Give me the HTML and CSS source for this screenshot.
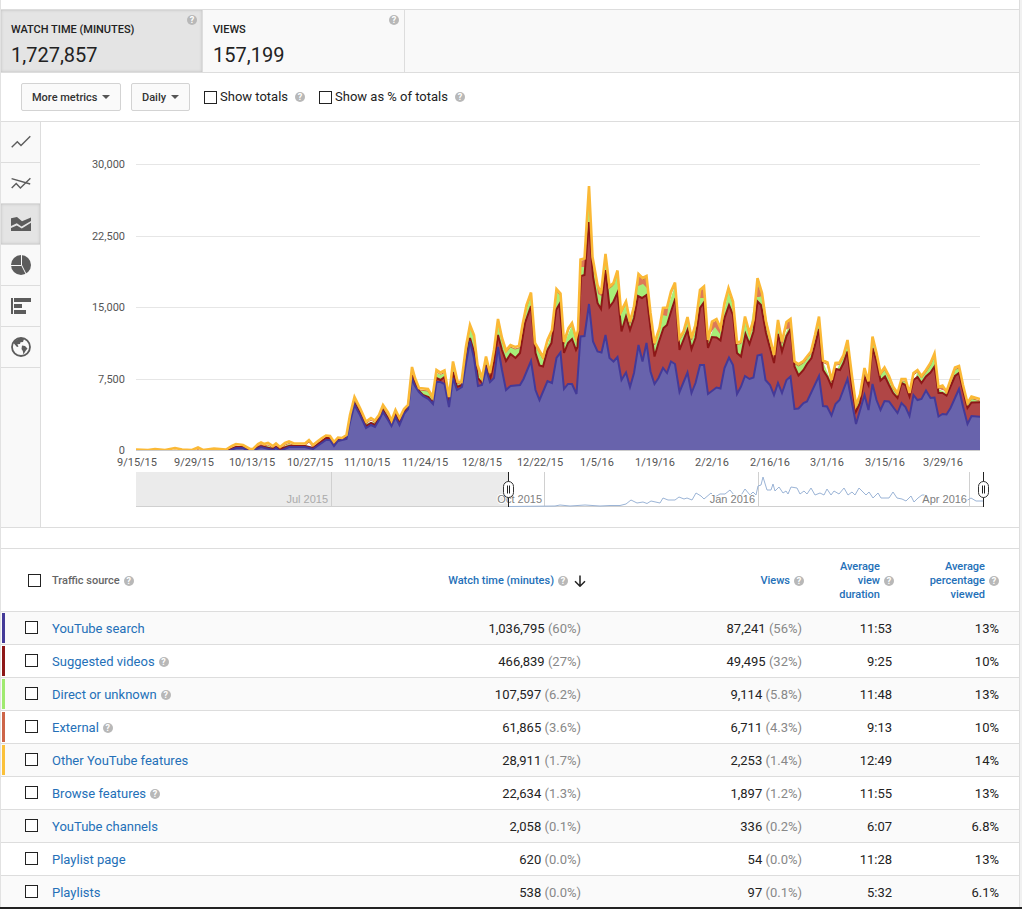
FILE: index.html
```html
<!DOCTYPE html>
<html lang="en">
<head>
<meta charset="utf-8">
<title>Traffic sources</title>
<link rel="stylesheet" href="styles.css">
</head>
<body>
<main class="report">
  <div class="metrics">
    <button class="metric active" type="button"><span class="help">?</span><span class="metric-name">WATCH TIME (MINUTES)</span><span class="metric-value">1,727,857</span></button>
    <button class="metric" type="button"><span class="help">?</span><span class="metric-name">VIEWS</span><span class="metric-value">157,199</span></button>
  </div>

  <div class="toolbar">
    <span class="dropdown metrics-drop"><select aria-label="More metrics"><option>More metrics</option></select></span>
    <span class="dropdown period-drop"><select aria-label="Period"><option>Daily</option></select></span>
    <label class="option totals"><input type="checkbox" class="check">Show totals</label><span class="help">?</span>
    <label class="option percent"><input type="checkbox" class="check">Show as % of totals</label><span class="help">?</span>
  </div>

  <section class="chart-area">
    <nav class="rail">
      <button type="button" aria-label="Line chart"><svg viewBox="0 0 20 20"><path class="line" d="M0.7 15.2 6.3 9.7 10 13.400 19.3 4.300"/></svg></button>
      <button type="button" aria-label="Compare metrics"><svg viewBox="0 0 20 20"><path class="line" d="M.7 15 5.2 10.500 9.4 15 19.4 5.300M.6 5.700 19.2 11"/></svg></button>
      <button type="button" class="active" aria-label="Stacked chart"><svg viewBox="0 0 20 20"><path d="M0 4.2 6 3 11 7.3 20 3.6V7L10.5 12.4 5.8 9.3 0 12zM0 14 5.8 11.6 10.8 14.5 20 8.8V17H0z"/></svg></button>
      <button type="button" aria-label="Pie chart"><svg viewBox="0 0 20 20"><circle cx="10" cy="10" r="10"/><path class="cut" d="M10.5 0V10L15 19M0 10.5H10.5"/></svg></button>
      <button type="button" aria-label="Bar chart"><svg viewBox="0 0 20 20"><path d="M0 2H2V18H0zM3 2H20V6H3zM3 8H11V12H3zM3 14H15V18H3z"/></svg></button>
      <button type="button" aria-label="Map"><svg viewBox="0 0 20 20"><circle class="ring" cx="10" cy="10" r="9"/><path d="M4 4 8 1.5 13 2 12 5 9.5 5.2 9 7 6.3 7.3 7.500 9.500 6 10 2.5 6zM11 8.500 14 9 16.500 11.500 14.5 14 12.5 17.500 11.8 14 10.5 12z"/></svg></button>
    </nav>
    <svg class="chart" viewBox="41 122 978 405" role="img" aria-label="Daily watch time by traffic source">
      <defs>
        <path id="total" d="M136 449.5 148 450 155 449 165 450 175 448 182 449.5 192 450 198 447.5 203 450 214 448.5 226 449.5 232 446 236 444 243 445 250 449 253 449 258 444 261 442.5 264 444 268 443 273 446 276 443.5 280 447 285 443 289 441.5 294 443.5 305 443.5 309 440 313 445 318 441 322 438 326 435.5 330 436 334 442 338 437.5 342 438 346.5 435 350 415 354.5 397 360 408 366 421.5 371 418 375 420.5 379 415 383 405 388 412.5 391.5 420.5 395.5 410 399.5 418 404 409 408 405 412 367 415 378 419 388 428 389 432.5 397 436.5 370 440.5 372.5 444.5 370.5 449 397 453 361.5 457.5 381.5 461.5 382 466 346.5 470 325 474 335 477.5 365 482 378 486 356.5 490 373 494 350 498 319 502 338 506 350.5 510.5 345 515 347 519 346 522.5 325 526.5 305 531 292.5 535 343 543 357 547.5 340 552 330 556.5 289 560.5 293.5 564 342 568.5 328 572 323 576 338 578 330 580.5 259.5 584.5 258.5 589 186 592.5 257 597.5 285 601 293.5 605.5 254 609.5 286.5 613.5 283 617.5 270.5 621 311.5 626 301.5 630 321.5 634 306.5 638.5 274 642.5 278 646.5 276 650.5 313 654.5 343 659.5 328 663 308 667 307.5 671 291.5 675 282.5 679.5 338 683.5 331.5 687.5 317 691.5 338 695.5 325 700 290 704 286.5 708 340 712 321.5 716.5 319 720.5 328 724.5 303 728.5 288 733 301.5 737 342.5 741 341.5 745 316.5 749.5 333 753.5 320 757.5 278 762 293 766 321.5 770 338 774 355 778 320 782 341.5 786.5 322 790.5 319 794.5 361.5 798.5 364 803.5 361 807 356.5 811 351.5 815 335 819 316.5 823 360.5 827.5 362.5 831.5 380 835.5 363 839.5 362.5 843.5 355 847.5 340 852 376.5 856 405 860 395 864.5 368 868.5 381.5 872.5 336.5 876.5 353 880.5 373 884.5 367.5 889 376 893 386.5 897.5 393 901.5 379 905.5 379 909.5 393 913.5 373 917.5 370 921.5 376 926 370 930.5 363 934.5 353.5 938.5 387 942.5 385.5 946.5 391.5 950.5 380 955 367.5 959 366 963 385 967.5 403 971.5 396.5 980 399"/>
        <clipPath id="plot"><path d="M136 150H980V450H136z"/></clipPath>
      </defs>
      <path class="grid" d="M136 164.5H980M136 236.5H980M136 307.5H980M136 379.5H980"/>
      <g class="axis y-axis"><text x="125" y="168">30,000</text><text x="125" y="240">22,500</text><text x="125" y="311">15,000</text><text x="125" y="383">7,500</text><text x="125" y="454">0</text></g>
      <g clip-path="url(#plot)">
        <path class="direct" d="M136 451 226 451 236 447 243 447 250 450 261 445 273 447 280 448 289 444 305 445 313 447 326 438 334 443 346.5 437 354.5 399 366 423 375 422 383 407 391.5 422 395.5 412 399.5 420 408 407 412 369 419 390 428 391 432.5 399 436.5 373 440.5 375 444.5 373 449 400 453 364 457.5 384 461.5 384 466 349 470 328 474 338 477.5 367 482 380 486 359 490 375 494 352 498 321 502 340 506 353 510.5 347 515 349 519 348 526.5 307 531 295 535 345 543 359 552 332 556.5 291 560.5 296 564 344 572 325 577 338 580.5 262 584.5 261 589 189 592.5 260 597.5 287 601 296 605.5 257 609.5 289 617.5 273 621 314 626 304 630 323 638.5 276 646.5 278 650.5 315 654.5 345 663 310 667 310 675 285 679.5 340 687.5 319 691.5 340 700 292 704 289 708 342 716.5 321 720.5 330 728.5 290 733 303 737 344 741 344 745 319 749.5 335 757.5 281 762 295 774 357 778 322 782 343 790.5 321 794.5 363 803.5 363 811 354 819 319 823 362 831.5 382 839.5 364 847.5 342 856 407 864.5 370 868.5 383 872.5 339 880.5 375 884.5 369 897.5 395 901.5 381 905.5 381 909.5 395 917.5 372 921.5 378 934.5 356 938.5 389 946.5 393 955 369 959 368 967.5 405 971.5 398 980 401V451H136z"/>
        <use href="#total" y="2" class="external"/>
        <path class="patch" d="M581 261 585 260 585 267 581 267zM597 287 601 295 605 288 604 297 598 294zM639 276 643 280 647 278 648 289 643 284 638 286zM662 309 668 309 667 316 662 315zM699 291 704 289 705 298 700 298zM711 324 716 321 720 329 720 334 715 327 710 334zM757 283 762 296 759 297 755 297zM786 323 790 321 790 328 785 330zM938 388 942 386 946 391 942 390z"/>
        <path class="suggested" d="M136 451 226 451 236 447 243 447 250 451 261 446 273 449 276 447 280 449 289 446 305 446 313 448 326 438 330 438 334 444 338 439 346.5 437 354.5 403 360 413 366 426 371 423 375 425 379 418 383 410 388 418 391.5 424 395.5 414 399.5 423 404 412 408 407 412 374 415 383 419 391 423 395 428.5 397 433 403 436.5 378 440.5 380 444.5 377 449 405 453 372 457 387 462 385 466 360 470 338 474 352 478 378 482 383 486 365 490 380 494 362 498 335 502 350 506 361 510.5 354 515.5 358 520 353 525 323 531 306 535.5 353 539.5 365.5 543 366.5 547.5 350 551.5 343 556 310 559.5 304 564 353 568 343 572 339 576 350 577.5 347 581 276 584.5 275 589 222 593 276.5 597.5 303 601 309 605.5 270 609.5 307 613.5 301.5 617.5 292.5 621.5 331.5 626 316.5 630 330 634 318 638 296 642 298 646.5 295 650.5 328 654.5 356.5 658.5 343 663.5 328 667 325 671.5 310 675.5 298 679.5 350 687.5 330 691.5 349 695.5 338 700 308 703.5 303 708 348 712 337 716.5 337.5 720.5 340.5 724.5 318 729 305 733 315 737 353 741 356.5 745.5 334 749.5 344 753.5 331.5 757.5 301.5 761 305 766 333 770 348 774 363 778 334 782 351.5 786.5 336 790.5 329 794.5 366.5 798.5 375.5 803.5 370 807 364 811.5 358 815.5 343 819 329 823 370 827.5 377 831.5 386.5 836 369 840 370 843.5 363 847.5 351.5 852 386.5 856 411.5 860 403 864.5 376.5 868.5 385 872.5 348 876.5 361.5 880.5 380.5 885 376.5 889 385 893 393 897.5 398 901.5 383 905.5 385 909.5 396.5 913.5 380 917.5 377 921.5 383 926 376.5 930.5 372.5 934.5 366.5 938.5 393 942.5 393 946.5 395.5 950.5 386.5 955 376 959 373 963 390 967.5 408 971.5 402.5 983 402V455H136z"/>
        <path class="search" d="M133 452 226 452 236 448 243 448 250 452 261 447 273 450 276 448 280 451 289 447 305 447 313 449 326 440 330 440 334 446 338 441 346.5 439 350 422 354.5 405 360 415 366 428 371 425 375 427 379 420 383 412 388 420 391.5 426 395.5 417 399.5 425 404 414 408 409 412 379 415 386 419 392 423 396 428.5 399 433 404 436.5 382 440.5 382 444.5 384 449 407 453 378 457 390 462 387 466 363 470 341 474 358 478 386 482 385 486 369 490 382 494 378 498 347 502 370 506 390 510.5 386 520 385 523.5 379 531 361 535.5 390 539.5 400 547.5 381 552 383 556.5 358 560.5 352.5 564 389 568 384 572 384 576.5 394 580.5 336.5 584.5 336 589 304 593 341.5 597.5 351.5 601.5 352.5 605.5 335 609.5 358 613.5 361.5 617.5 357 621.5 380 626 372.5 630 387 634 373 638.5 345 642.5 361.5 646.5 343 650.5 371.5 654.5 384 658.5 378 663 368 667 373 671 361.5 675 364 679.5 392 687.5 372.5 691.5 393 695.5 383 700 365 704 365 708 394 716.5 387.5 720.5 388.5 724.5 368 729 357.5 733 365 737 394 741 386.5 745 376 749.5 379 753.5 377.5 757.5 355.5 761.5 354.5 765.5 380 770 385 774 395 778 383 782 393 786.5 380 790.5 376.5 794.5 409 798.5 408.5 803.5 403 807 401.5 819 376 823 406 827 406.5 831.5 415.5 835.5 404 839.5 400 847.5 379 852 403 856 424 864.5 395 868.5 410 872.5 384 876.5 400 880.5 410 884.5 401 889 401.5 897.5 413 901.5 403 905.5 407 909.5 416 913.5 395 917.5 400 921.5 399 926 390.5 930.5 398 934.5 397.5 938.5 416.5 942.5 414 946.5 414.5 950.5 408 959 389 963 406.5 967.5 424 971.5 416 984 417V456H133z"/>
        <use href="#total" class="other"/>
      </g>
      <path class="base" d="M136 450.5H980"/>
      <g class="axis x-axis"><text x="137" y="466">9/15/15</text><text x="194" y="466">9/29/15</text><text x="252" y="466">10/13/15</text><text x="310" y="466">10/27/15</text><text x="367" y="466">11/10/15</text><text x="425" y="466">11/24/15</text><text x="482" y="466">12/8/15</text><text x="540" y="466">12/22/15</text><text x="597" y="466">1/5/16</text><text x="655" y="466">1/19/16</text><text x="712" y="466">2/2/16</text><text x="770" y="466">2/16/16</text><text x="827" y="466">3/1/16</text><text x="885" y="466">3/15/16</text><text x="943" y="466">3/29/16</text></g>
      <path class="unselected" d="M136 472H508V507H136z"/>
      <path class="tick" d="M136 506.5H984M331.5 472V507M544.5 472V507M758.5 472V507M969.5 472V507"/>
      <path class="mini" d="M508 506.5 555 506 560 505 570 506 585 505 600 506 610 505.5 620 505.5 626 504 631 500 637 503 643 502 647 503.5 651 501 660 503 663 498 668 500 675 500 679 497 684 499 687 498 692 500 696 493 701 496 704 499 711 493 715 497 720 494 725 494 730 490 734 495 740 497 745 489 750 495 753 492 756 495 758 486 761 485 763 477 767 490 771 490 773 484 775 491 779 487 783 493 786 491 788 494 791 487 797 488 800 494 804 491 807 494 811 488 815 495 820 493 824 495 827 489 831 495 834 491 839 494 844 488 848 495 852 492 855 495 859 488 866 495 869 492 873 498 878 493 881 498 889 498 893 492 897 498 902 499 906 501 911 496 914 502 918 498 922 495 925 495M966 501 971 498 976 501 984 501"/>
      <g class="months"><text x="328" y="503">Jul 2015</text><text x="542" y="503">Oct 2015</text><text x="755" y="503">Jan 2016</text><text x="967" y="503">Apr 2016</text></g>
      <g class="handle"><path d="M508.500 472V507M983.500 472V507"/><rect x="503.500" y="481.500" width="10" height="16" rx="5"/><rect x="978.500" y="481.500" width="10" height="16" rx="5"/><path d="M507.500 485.500V493.500M509.500 485.500V493.500M982.500 485.500V493.500M984.500 485.500V493.500"/></g>
    </svg>
  </section>

  <table class="sources">
    <colgroup><col class="c-check"><col><col class="c-watch"><col class="c-views"><col class="c-duration"><col class="c-percent"></colgroup>
    <thead><tr>
      <th><input type="checkbox" class="check" aria-label="Select all"></th>
      <th><div class="source">Traffic source<span class="help">?</span></div></th>
      <th><div class="head"><a href="#">Watch time (minutes)</a><span class="help">?</span><svg class="sort" viewBox="0 0 12 12"><path d="M6 0.500V11M1 6.200 6 11.200 11 6.200"/></svg></div></th>
      <th><div class="head"><a href="#">Views</a><span class="help">?</span></div></th>
      <th><div class="head"><a href="#">Average<br>view<br>duration</a><span class="help">?</span></div></th>
      <th><div class="head"><a href="#">Average<br>percentage<br>viewed</a><span class="help">?</span></div></th>
    </tr></thead>
    <tbody>
      <tr class="s-search"><td><input type="checkbox" class="check" aria-label="YouTube search"></td><td><a href="#">YouTube search</a></td><td>1,036,795 <i>(60%)</i></td><td>87,241 <i>(56%)</i></td><td>11:53</td><td>13%</td></tr>
      <tr class="s-suggested"><td><input type="checkbox" class="check" aria-label="Suggested videos"></td><td><div class="source"><a href="#">Suggested videos</a><span class="help">?</span></div></td><td>466,839 <i>(27%)</i></td><td>49,495 <i>(32%)</i></td><td>9:25</td><td>10%</td></tr>
      <tr class="s-direct"><td><input type="checkbox" class="check" aria-label="Direct or unknown"></td><td><div class="source"><a href="#">Direct or unknown</a><span class="help">?</span></div></td><td>107,597 <i>(6.2%)</i></td><td>9,114 <i>(5.8%)</i></td><td>11:48</td><td>13%</td></tr>
      <tr class="s-external"><td><input type="checkbox" class="check" aria-label="External"></td><td><div class="source"><a href="#">External</a><span class="help">?</span></div></td><td>61,865 <i>(3.6%)</i></td><td>6,711 <i>(4.3%)</i></td><td>9:13</td><td>10%</td></tr>
      <tr class="s-other"><td><input type="checkbox" class="check" aria-label="Other YouTube features"></td><td><a href="#">Other YouTube features</a></td><td>28,911 <i>(1.7%)</i></td><td>2,253 <i>(1.4%)</i></td><td>12:49</td><td>14%</td></tr>
      <tr><td><input type="checkbox" class="check" aria-label="Browse features"></td><td><div class="source"><a href="#">Browse features</a><span class="help">?</span></div></td><td>22,634 <i>(1.3%)</i></td><td>1,897 <i>(1.2%)</i></td><td>11:55</td><td>13%</td></tr>
      <tr><td><input type="checkbox" class="check" aria-label="YouTube channels"></td><td><a href="#">YouTube channels</a></td><td>2,058 <i>(0.1%)</i></td><td>336 <i>(0.2%)</i></td><td>6:07</td><td>6.8%</td></tr>
      <tr><td><input type="checkbox" class="check" aria-label="Playlist page"></td><td><a href="#">Playlist page</a></td><td>620 <i>(0.0%)</i></td><td>54 <i>(0.0%)</i></td><td>11:28</td><td>13%</td></tr>
      <tr><td><input type="checkbox" class="check" aria-label="Playlists"></td><td><a href="#">Playlists</a></td><td>538 <i>(0.0%)</i></td><td>97 <i>(0.1%)</i></td><td>5:32</td><td>6.1%</td></tr>
    </tbody>
  </table>
</main>
<div class="bottom-edge"></div>
</body>
</html>
```

FILE: styles.css
```css
* { box-sizing: border-box; }
body { margin: 0; padding-right: 2px; background: #f1f1f1; color: #222; font: 13px/16px Roboto, sans-serif; }
button, select, input { margin: 0; font-family: inherit; color: inherit; }
a { color: #2470b8; text-decoration: none; }
.report { padding-top: 9px; background: #fff; border-left: 1px solid #e2e2e2; border-right: 1px solid #ddd; }

.help { display: inline-block; flex: none; width: 10px; height: 10px; border-radius: 50%; background: #b8b8b8; color: #fff; font-size: 9px; font-weight: 700; line-height: 10px; text-align: center; }
.check { appearance: none; display: block; width: 13px; height: 13px; border: 1px solid #222; background: #fff; }

.metrics { display: flex; border-top: 1px solid #ddd; border-bottom: 1px solid #ddd; background: #f9f9f9; }
.metric { position: relative; display: flex; flex-direction: column; width: 202px; height: 62px; padding: 10px; border: 0; border-right: 1px solid #ddd; background: #f9f9f9; text-align: left; }
.metric.active { background: #e4e4e4; box-shadow: inset 0 0 3px #bbb; }
.metric .help { position: absolute; top: 5px; right: 5px; }
.metric-name { font-size: 11px; line-height: 20px; font-weight: 500; }
.metric-value { font-size: 20px; line-height: 30px; }

.toolbar { display: flex; align-items: center; height: 49px; padding-left: 20px; border-bottom: 1px solid #ddd; }
.dropdown { position: relative; height: 28px; margin-right: 10px; }
.dropdown::after { content: ""; position: absolute; top: 12px; right: 11px; border: 4px solid transparent; border-top-color: #555; border-bottom: 0; pointer-events: none; }
.dropdown select { appearance: none; width: 100%; height: 28px; padding: 0 10px; border: 1px solid #d3d3d3; border-radius: 2px; background: #fafafa; color: #333; font-size: 11px; font-weight: 500; }
.metrics-drop { width: 100px; }
.period-drop { width: 59px; }
.option { display: flex; align-items: center; gap: 3px; margin-right: 7px; line-height: 18px; }
.totals { margin-left: 4px; }
.percent { margin-left: 14px; }

.chart-area { display: flex; border-bottom: 1px solid #ddd; }
.rail { flex: 0 0 40px; border-right: 1px solid #ddd; background: #f9f9f9; }
.rail button { display: flex; align-items: center; justify-content: center; width: 39px; height: 41px; padding: 0; border: 0; border-bottom: 1px solid #ddd; background: none; }
.rail .active { background: #e4e4e4; box-shadow: inset 0 0 3px #bbb; }
.rail svg { width: 20px; height: 20px; fill: #5c5c5c; }
.rail .line, .rail .ring { fill: none; stroke: #5c5c5c; }
.rail .line { stroke-width: 1.4; }
.rail .ring { stroke-width: 1.8; }
.rail .cut { fill: none; stroke: #f9f9f9; stroke-width: 1; }
.chart { display: block; flex: 1; min-width: 0; align-self: flex-start; }
.grid { stroke: #e6e6e6; }
.axis { font-size: 11px; fill: #555; }
.y-axis, .months { text-anchor: end; }
.x-axis { text-anchor: middle; }
.search, .suggested, .other { stroke-width: 2; stroke-linejoin: miter; }
.search { fill: #6863ac; stroke: #443a98; }
.suggested { fill: #b04646; stroke: #8d1717; }
.direct { fill: #a7ee77; }
.external { fill: none; stroke: #d9773c; stroke-width: 1; }
.patch { fill: #dc7a58; }
.other { fill: none; stroke: #fbb936; stroke-width: 2.6; }
.base { stroke: #ccc; }
.unselected { fill: #ebebeb; }
.tick { stroke: #d0d0d0; }
.mini { fill: none; stroke: #9bb4d6; }
.months { font: 11px "Liberation Sans", sans-serif; fill: #808080; stroke: #fff; stroke-width: 2; paint-order: stroke; }
.months text:first-child { fill: #aaa; stroke: #ebebeb; }
.handle path { stroke: #222; }
.handle rect { fill: #fff; stroke: #333; }

.sources { width: 100%; margin-top: 20px; border-collapse: separate; border-spacing: 0; border-top: 1px solid #ddd; table-layout: fixed; }
.c-check { width: 51px; }
.c-watch { width: 290px; }
.c-views { width: 220px; }
.c-duration { width: 90px; }
.c-percent { width: 119px; }
th { height: 63px; padding: 2px 0 0; border-bottom: 1px solid #ddd; color: #666; font-size: 11px; line-height: 14px; font-weight: 500; text-align: left; }
th:first-child { padding: 0; }
th .check { margin-left: 27px; }
.source { display: flex; align-items: center; gap: 4px; }
.head { display: flex; align-items: center; justify-content: flex-end; gap: 4px; padding-right: 6px; text-align: right; }
th:nth-child(3) .head { padding-right: 4px; }
th:last-child .head { padding-right: 20px; }
.sort { width: 12px; height: 12px; margin-left: 2px; fill: none; stroke: #222; stroke-width: 1.500; }
td { height: 33px; padding: 2px 8px 0 0; border-bottom: 1px solid #ddd; text-align: right; }
td:first-child { padding: 0; background: linear-gradient(var(--mark, transparent), var(--mark, transparent)) 1px 1px / 3px 30px no-repeat; }
td:nth-child(2) { text-align: left; }
td:nth-child(3) { padding-right: 9px; }
td:last-child { padding-right: 20px; }
td .check { margin: 0 0 2px 24px; }
tbody tr:nth-child(odd) { background: #fafafa; }
tbody i { color: #888; font-style: normal; }
.s-search { --mark: #443a98; }
.s-suggested { --mark: #8d1717; }
.s-direct { --mark: #a0ea70; }
.s-external { --mark: #cd6548; }
.s-other { --mark: #fbc13a; }
.bottom-edge { position: fixed; right: 0; bottom: 0; left: 0; height: 2px; background: #222; }
```
